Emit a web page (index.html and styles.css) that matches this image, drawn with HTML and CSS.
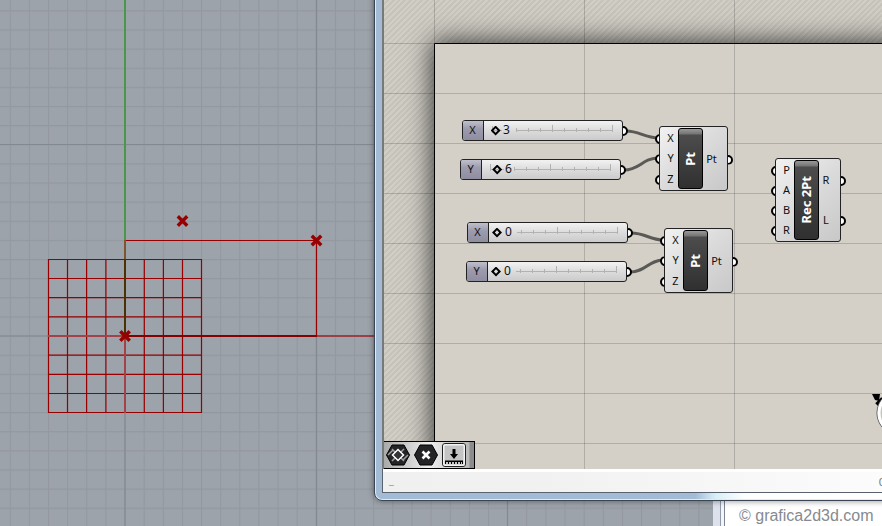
FILE: index.html
```html
<!DOCTYPE html>
<html lang="en">
<head>
<meta charset="utf-8">
<title>Canvas</title>
<link rel="stylesheet" href="styles.css">
</head>
<body>
<main class="desktop">
  <svg class="viewport" aria-hidden="true">
    <defs>
      <pattern id="minor" x="124.5" y="335.5" width="19.13" height="19.13" patternUnits="userSpaceOnUse">
        <path d="M0 .5H20M.5 0V20" stroke="#8d919b" stroke-width="1.2" opacity=".65"/>
      </pattern>
      <g id="mark"><path d="M-3.5-3.5 3.5 3.5M3.5-3.5-3.5 3.5" stroke="#960000" stroke-width="3.4" stroke-linecap="square"/></g>
    </defs>
    <rect width="100%" height="100%" fill="#9da3aa"/>
    <rect width="100%" height="100%" fill="url(#minor)"/>
    <path d="M125 336V2000M316.500 0V2000M507.500 0V2000M0 144.500H3000M0 336H125" stroke="#848890" stroke-width="1.2" fill="none"/>
    <path d="M125 336H3000" stroke="#9a4146" stroke-width="2"/>
    <path d="M125 0V336" stroke="#489848" stroke-width="2"/>
    <g stroke="#960000" fill="none" stroke-width="1.2">
      <path d="M48.500 259.500H201.500M48.500 278.500H201.500M48.500 297.600H201.500M48.500 316.800H201.500M48.500 355.200H201.500M48.500 374.300H201.500M48.500 393.500H201.500M48.500 412.500H201.500"/>
      <path d="M48.500 259V413M67.500 259V413M86.600 259V413M105.900 259V413M144.300 259V413M163.400 259V413M182.500 259V413M201.500 259V413"/>
      <path d="M48 336H125M125 336V413" stroke="#a34349" stroke-width="2"/>
      <path d="M125 240.500H316.500V336"/>
      <path d="M125 336H317" stroke="#870000" stroke-width="2"/>
      <path d="M125 240V259" stroke="#7f552e" stroke-width="2"/>
      <path d="M125 259V336" stroke="#493100" stroke-width="2"/>
    </g>
    <use href="#mark" x="182.500" y="221"/><use href="#mark" x="316.500" y="240.500"/><use href="#mark" x="125" y="336"/>
  </svg>

  <section class="back-window"><p class="credit">© grafica2d3d.com</p></section>

  <section class="window">
    <div class="canvas">
      <div class="page"></div>
      <svg class="wires" aria-hidden="true">
        <defs><pattern id="cells" x="50" y="43" width="150" height="50" patternUnits="userSpaceOnUse"><path d="M0 .5H150M.5 0V50" stroke="#000" stroke-opacity=".17"/></pattern></defs>
        <rect width="100%" height="100%" fill="url(#cells)"/>
        <path d="M50.500 2000V43.500H3000" fill="none" stroke="#000"/>
        <g fill="none" stroke="#5a5955" stroke-width="3">
          <path d="M242 131C256 131 260 138 275 138M240 170C256 170 258 158 275 158M247 233C262 233 265 240 280 240M246 272C262 272 264 260 280 260"/>
        </g>
        <path d="M488 394 496 394 495 401 491 400Z" fill="#000"/>
        <path d="M493 405 499 399" stroke="#000" stroke-width="5"/>
        <circle cx="515" cy="413" r="22" fill="#d8d8d5" stroke="#555"/>
        <circle cx="515" cy="413" r="20" fill="#c5c5c2" stroke="#fff" stroke-width="3"/>
      </svg>

      <div class="slider s1"><div class="slider-body"><label for="n1">X</label><div class="scale">
        <svg class="ticks" viewBox="0 0 128 19"><path d="M4.500 5V12M4 9.500H14M28 9.500H125M28.500 7V11M40.500 7V11M52.500 7V11M64.500 4V11M76.500 7V11M88.500 7V11M100.500 7V11M112.500 7V11M124.500 4V11"/></svg>
        <input id="n1" type="range" min="0" max="100" value="3"><output for="n1">3</output></div></div></div>
      <div class="slider s2"><div class="slider-body"><label for="n2">Y</label><div class="scale">
        <svg class="ticks" viewBox="0 0 128 19"><path d="M4.500 4V11M4 9.500H18M28 9.500H125M28.500 7V11M40.500 7V11M52.500 7V11M64.500 4V11M76.500 7V11M88.500 7V11M100.500 7V11M112.500 7V11M124.500 4V11"/></svg>
        <input id="n2" type="range" min="0" max="100" value="6"><output for="n2">6</output></div></div></div>
      <div class="slider s3"><div class="slider-body"><label for="n3">X</label><div class="scale">
        <svg class="ticks" viewBox="0 0 128 19"><path d="M24 9.500H125M28.500 7V11M40.500 7V11M52.500 7V11M64.500 4V11M76.500 7V11M88.500 7V11M100.500 7V11M112.500 7V11M124.500 4V11"/></svg>
        <input id="n3" type="range" min="0" max="100" value="0"><output for="n3">0</output></div></div></div>
      <div class="slider s4"><div class="slider-body"><label for="n4">Y</label><div class="scale">
        <svg class="ticks" viewBox="0 0 128 19"><path d="M24 9.500H125M28.500 7V11M40.500 7V11M52.500 7V11M64.500 4V11M76.500 7V11M88.500 7V11M100.500 7V11M112.500 7V11M124.500 4V11"/></svg>
        <input id="n4" type="range" min="0" max="100" value="0"><output for="n4">0</output></div></div></div>

      <div class="node pt1"><div class="node-body">
        <ul class="ports in"><li>X</li><li>Y</li><li>Z</li></ul><div class="core"><span>Pt</span></div><ul class="ports out"><li>Pt</li></ul>
      </div></div>
      <div class="node pt2"><div class="node-body">
        <ul class="ports in"><li>X</li><li>Y</li><li>Z</li></ul><div class="core"><span>Pt</span></div><ul class="ports out"><li>Pt</li></ul>
      </div></div>
      <div class="node rec"><div class="node-body">
        <ul class="ports in"><li>P</li><li>A</li><li>B</li><li>R</li></ul><div class="core"><span>Rec 2Pt</span></div><ul class="ports out"><li>R</li><li>L</li></ul>
      </div></div>

      <div class="toolbar">
        <button type="button" aria-label="Mesh edges"><svg viewBox="0 0 24 24"><path class="hex" d="M6 2H18L23.500 12 18 22H6L.5 12Z"/><path d="M6 6 18 18M18 6 6 18M2 12 7 7M22 12 17 17" stroke="#a0a0a2" stroke-width="1.500"/><path d="M12 6.500 17.500 12 12 17.500 6.500 12Z" fill="#343438" stroke="#fff" stroke-width="1.500"/></svg></button>
        <button type="button" aria-label="Close"><svg viewBox="0 0 24 24"><path class="hex" d="M6 2H18L23.500 12 18 22H6L.5 12Z"/><path d="M8.500 8.500 15.500 15.500M15.500 8.500 8.500 15.500" stroke="#fff" stroke-width="2.600"/></svg></button>
        <button type="button" aria-label="Snap down"><svg viewBox="0 0 24 24"><rect x=".5" y=".5" width="23" height="23" rx="2.500" fill="#c4c4c4" stroke="#222"/><rect x="1.750" y="1.750" width="20.500" height="20.500" rx="1.500" fill="none" stroke="#f2f2f2" stroke-width="1.500"/><path d="M10.500 6H13.500V11H16L12 16 8 11H10.500ZM3 17.500H21V19H3Z"/><path d="M3.500 19V21M6.500 19V21M9.500 19V21M12.500 19V21M15.500 19V21M18.500 19V21M20.500 19V21" stroke="#000"/></svg></button>
      </div>
    </div>
    <footer class="status"><span class="dots">_</span><span>0</span></footer>
  </section>
</main>
</body>
</html>
```
FILE: styles.css
```css
*, *::before, *::after { box-sizing: border-box; }
body { margin: 0; font: 11px/20px "Noto Sans", "Open Sans", sans-serif; color: #111; }
.desktop { position: relative; height: 100vh; overflow: hidden; background: #9da3aa; }
.viewport { position: absolute; inset: 0; width: 100%; height: 100%; }

.back-window {
  position: absolute; left: 713px; right: 0; bottom: 0; height: 40px;
  display: flex; align-items: flex-end; padding-left: 26px;
  background: linear-gradient(90deg, #dde1eb 0 7px, #9299a8 7px 8px, #f4f5f8 8px 11px, #7d8494 11px 12px, #fff 12px);
}
.credit { margin: 0; font: 16px/20px "Liberation Sans", sans-serif; color: #868a90; white-space: nowrap; }

.window {
  position: absolute; left: 374px; right: -16px; top: -11px; bottom: 25px;
  display: flex; flex-direction: column;
  padding: 10px 7px 7px 8px;
  border: 1px solid #3b4654; border-radius: 8px;
  background: linear-gradient(90deg, #a3bbd5 0 320px, #d8eef6 340px, #fff 370px);
  box-shadow: inset 0 0 0 1px #dcebf8, 0 0 6px rgba(0, 0, 0, .45);
}
.canvas {
  position: relative; flex: 1; overflow: hidden; margin-left: -1px;
  border-left: 2px solid #77797b;
  background: repeating-linear-gradient(135deg, #d1cec6 0 2px, #c6c3bb 2px 4px);
}
.page {
  position: absolute; left: 50px; right: -60px; top: 43px; bottom: -60px;
  background: #d4d0c8; box-shadow: 0 0 24px 2px rgba(0, 0, 0, .72);
}
.wires { position: absolute; inset: 0; width: 100%; height: 100%; }

.status {
  display: flex; justify-content: space-between; height: 24px; margin-left: -1px; padding: 3px 5px 0 6px;
  border: solid #596370; border-width: 0 0 1px 1px; box-shadow: inset 0 3px #fff;
  background: linear-gradient(90deg, #f0f0f0, #f1f1f1 30%, #fcfcfc); color: #777;
}
.dots { color: #d08830; line-height: 16px; }

/* Number sliders */
.slider { position: absolute; width: 161px; height: 21px; }
.slider::after, .ports li::before {
  content: ""; position: absolute; width: 10px; height: 10px;
  border: 2px solid #000; border-radius: 50%; background: #fff;
}
.slider::after { right: -5px; top: 6px; z-index: 0; }
.slider-body {
  position: relative; z-index: 1; display: flex; height: 100%;
  border: 1px solid #222; border-radius: 3px; overflow: hidden;
  background: linear-gradient(#f2f2f2, #dedede 45%, #cbcbcb);
}
.slider label {
  width: 21px; padding-right: 1px; border-right: 1px solid #222; text-align: center; line-height: 17px;
  background: linear-gradient(#c0c0cc, #9c9cae 40%, #8e8ea0);
}
.scale { position: relative; margin-left: 4px; width: 128px; }
.ticks { display: block; width: 128px; height: 19px; fill: none; stroke: #b2b2b2; }
.scale input { position: absolute; left: -1px; top: 0; width: 130px; height: 19px; margin: 0; appearance: none; background: none; }
.scale input::-webkit-slider-thumb {
  appearance: none; width: 10px; height: 10px; background: #000;
  clip-path: polygon(evenodd, 50% 0, 100% 50%, 50% 100%, 0 50%, 50% 0, 50% 28%, 72% 50%, 50% 72%, 28% 50%, 50% 28%);
}
.scale output { position: absolute; left: 15px; top: 0; font-size: 12px; line-height: 17px; pointer-events: none; }
.s1 { left: 78px; top: 120px; }
.s2 { left: 76px; top: 159px; }
.s3 { left: 83px; top: 222px; }
.s4 { left: 82px; top: 261px; }
.s2 output { left: 19px; }
.s3 output, .s4 output { left: 12px; }

/* Components */
.node { position: absolute; width: 69px; }
.node-body {
  position: relative; display: flex; padding: 1px 0;
  border: 1px solid #222; border-radius: 3px;
  background: linear-gradient(135deg, #f2f2f2, #dcdcdc 45%, #c8c8c8);
}
.ports { display: flex; flex-direction: column; margin: 0; padding: 0; list-style: none; text-align: center; }
.ports li { position: relative; flex: 1; display: flex; align-items: center; justify-content: center; min-height: 20px; }
.ports.in { width: 18px; padding-left: 3px; }
.ports.out { flex: 1; padding-right: 7px; }
.ports li::before { top: calc(50% - 4px); }
.in li::before { left: -8px; clip-path: inset(0 6px 0 0); }
.out li::before { right: -13px; clip-path: inset(0 0 0 5px); }
.core {
  width: 25px; min-height: 61px; display: flex; align-items: center; justify-content: center;
  border: 1px solid #000; border-radius: 3px; color: #fff;
  background: linear-gradient(#999, #747474 5px, #4c4c4c 6px, #303030);
}
.core span { writing-mode: vertical-rl; transform: rotate(180deg); padding-left: 1px; font-size: 13px; font-weight: 700; line-height: 20px; white-space: nowrap; }
.pt1 { left: 275px; top: 126px; }
.pt2 { left: 280px; top: 228px; }
.rec { left: 391px; top: 158px; width: 66px; }

.toolbar {
  position: absolute; left: 0; bottom: 0; display: flex; gap: 4px; padding: 1px 8px 1px 2px;
  border: solid #000; border-width: 1px 1px 1px 0;
  background: linear-gradient(90deg, #aaa, #eee 50%, #b8b8b8 85px, #8c8c8c 86px);
}
.toolbar button { display: block; width: 24px; height: 24px; padding: 0; border: 0; background: none; }
.toolbar svg { display: block; width: 24px; height: 24px; }
.hex { fill: #242426; stroke: #000; }
```
